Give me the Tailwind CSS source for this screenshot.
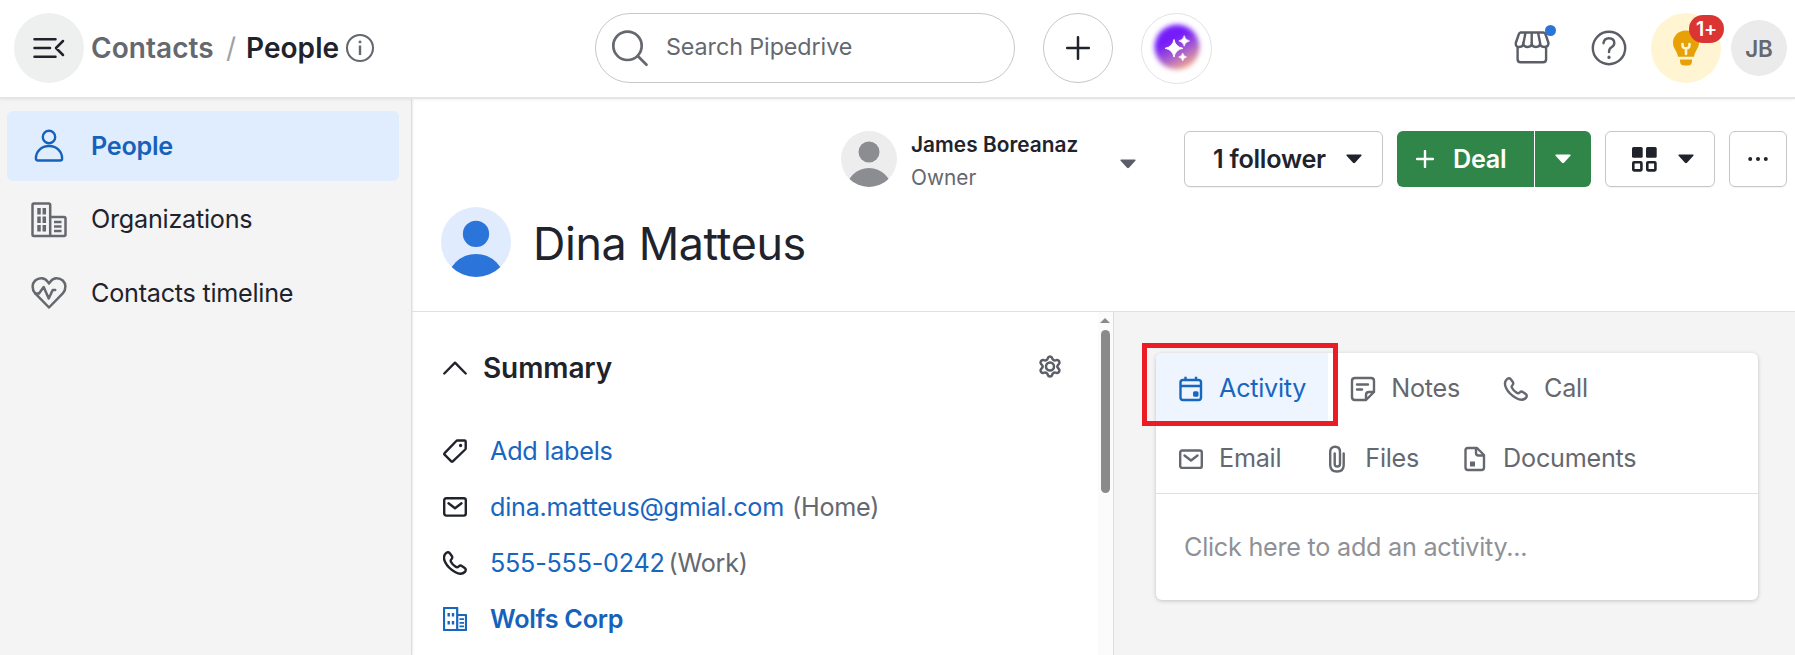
<!DOCTYPE html>
<html lang="en">
<head>
  <meta charset="UTF-8">
  <meta name="viewport" content="width=device-width, initial-scale=1.0">
  <title>Dina Matteus - Contacts</title>
  <script src="https://cdn.jsdelivr.net/npm/@tailwindcss/browser@4"></script>
</head>
<body class="w-[1795px] h-[655px] overflow-hidden bg-white font-['Inter','Liberation_Sans',sans-serif] text-[25.2px] leading-[35px] tracking-[-0.25px] text-[#21232c] whitespace-nowrap">
  <div class="flex flex-col h-full">

    <!-- Top bar -->
    <header class="relative z-10 flex items-center h-[99px] shrink-0 pb-px bg-white border-b-2 border-[#e5e5e6] shadow-[0_1px_3px_rgba(0,0,0,0.06)]">
      <div class="flex items-center w-[595px] pl-[14px] shrink-0">
        <button class="flex items-center justify-center size-[70px] rounded-full bg-[#eeefef]">
          <svg class="size-9" viewBox="0 0 36 36" fill="none" stroke="#21232c" stroke-width="2.5" stroke-linecap="round" stroke-linejoin="round">
            <path d="M3.5 9.2h21M3.5 18h15.5M3.5 26.8h21M32 11l-7 7 7 7"/>
          </svg>
        </button>
        <div class="flex items-center ml-[7px] text-[28px] tracking-[0.05px] font-semibold">
          <span class="text-[#65686f] w-[135px]">Contacts</span>
          <span class="text-[#9fa1a6] font-normal w-5">/</span>
          <span>People</span>
          <svg class="size-[30px] ml-[6px]" viewBox="0 0 30 30" fill="none" stroke="#65686f" stroke-width="2.1">
            <circle cx="15" cy="15" r="13"/>
            <path d="M15 12.5v9.5" stroke-width="2.4"/>
            <path d="M15 7.7v2.5" stroke-width="2.6"/>
          </svg>
        </div>
      </div>

      <div class="flex items-center w-[420px] h-[70px] shrink-0 pl-[14px] border border-[#c6c7c9] rounded-full text-[#65686f] text-[23.3px]">
        <svg class="size-10" viewBox="0 0 40 40" fill="none" stroke="#65686f" stroke-width="2.7" stroke-linecap="round">
          <circle cx="17.5" cy="17.8" r="14.2"/>
          <path d="M28 28.2l8.5 8.5"/>
        </svg>
        <span class="ml-4 mb-[3px] tracking-[-0.08px]">Search Pipedrive</span>
      </div>

      <button class="flex items-center justify-center size-[70px] ml-7 shrink-0 border border-[#c6c7c9] rounded-full">
        <svg class="size-6" viewBox="0 0 24 24" stroke="#21232c" stroke-width="2.5" stroke-linecap="round"><path d="M12 1.2v21.6M1.2 12h21.6"/></svg>
      </button>
      <button class="flex items-center justify-center size-[71px] ml-7 shrink-0 border border-[#e3e3e4] rounded-full">
        <svg class="size-[64px]" viewBox="0 0 64 64">
          <defs>
            <linearGradient id="ai" x1="0.3" y1="0.1" x2="0.75" y2="0.95">
              <stop offset="0.25" stop-color="#741afa"/>
              <stop offset="0.6" stop-color="#a45bd0"/>
              <stop offset="1" stop-color="#f3ab88"/>
            </linearGradient>
            <filter id="soft" x="-30%" y="-30%" width="160%" height="160%"><feGaussianBlur stdDeviation="2.8"/></filter>
          </defs>
          <circle cx="32" cy="31" r="22.5" fill="url(#ai)" filter="url(#soft)"/>
          <g fill="#fff" stroke="#fff" stroke-width=".6">
            <path d="M29 23.5q1.4 7.4 8.8 8.8q-7.4 1.4-8.8 8.8q-1.4-7.4-8.8-8.8q7.4-1.4 8.8-8.8z" stroke-width="1"/>
            <path d="M39.2 19.5q1 4.6 5.4 5.4q-4.4.9-5.4 5.4q-1-4.5-5.4-5.4q4.4-.8 5.4-5.4z"/>
            <path d="M37.7 37q.8 3.3 4 4q-3.2.7-4 4q-.8-3.3-4-4q3.2-.7 4-4z"/>
          </g>
        </svg>
      </button>

      <div class="flex items-center ml-auto pr-2">
        <div class="relative">
          <svg class="w-[38px] h-9" viewBox="0 0 38 36" fill="none" stroke="#5b5e66" stroke-width="2.4" stroke-linejoin="round">
            <path d="M7.5 2.5H30q2 0 2.6 2l2.9 8.5q0 4-4.2 4t-4.2-4q0 4-4.2 4t-4.2-4q0 4-4.2 4t-4.2-4q0 4-4 4t-3.500-4l2.900-8.500q.6-2 2-2z"/>
            <path d="M10.500 13l2-10.300M18.700 13V2.700M27.100 13l-2-10.300M4.600 16.500v12.700q0 3 3 3h22.500q3 0 3-3V16.500"/>
          </svg>
          <span class="absolute -top-[5px] left-[32px] size-[11px] rounded-full bg-[#2b74da]"></span>
        </div>
        <svg class="size-9 ml-10" viewBox="0 0 36 36" fill="none" stroke="#5b5e66" stroke-width="2.4" stroke-linecap="round">
          <circle cx="18" cy="18" r="16.2"/>
          <path d="M12.5 13.200q.5-5 5.500-5 5.300 0 5.300 4.900 0 2.500-2.800 4.200-2.500 1.500-2.500 4.700"/>
          <path d="M18 27.200v.3" stroke-width="3.200"/>
        </svg>
        <div class="relative flex items-center justify-center size-[70px] ml-6 rounded-full bg-[#fff5d2]">
          <svg class="w-[28px] h-[38px] -ml-px" viewBox="0 0 28 38" fill="#e8a007">
            <path d="M14 1.500c7.500 0 13 5.500 13 12.300 0 5.700-4 7.600-5 14H6c-1-6.400-5-8.300-5-14C1 7 6.500 1.500 14 1.500z"/>
            <path d="M8 30.500h12v1.500q0 4.500-4.500 4.500h-3Q8 36.500 8 32z"/>
            <path d="M10.500 15v1.500q0 2 1.700 2.500l1.800.7 1.800-.7q1.700-.5 1.700-2.500V15M14 19.500V25" fill="none" stroke="#fff5d2" stroke-width="2.600" stroke-linecap="round"/>
          </svg>
          <span class="absolute top-[2px] left-[38px] flex items-center justify-center w-[35px] h-7 rounded-full bg-[#da3533] text-white text-[19.6px] font-semibold">1+</span>
        </div>
        <div class="flex items-center justify-center size-14 ml-[10px] rounded-full bg-[#ebebec] text-[#65686f] text-[22.4px] tracking-normal font-semibold">JB</div>
      </div>
    </header>

    <div class="flex flex-1 min-h-0">
      <!-- Sidebar -->
      <nav class="w-[412px] shrink-0 pt-3 pl-[7px] pr-3 bg-[#f4f4f4] border-r border-[#dcdddf] flex flex-col gap-[3.5px] shadow-[1px_0_2px_rgba(0,0,0,0.08)]">
        <a class="flex items-center h-[70px] shrink-0 pl-6 rounded-md bg-[#e0edff] text-[#1662bb] font-semibold">
          <svg class="size-9" viewBox="0 0 36 36" fill="none" stroke="currentColor" stroke-width="2.4" stroke-linejoin="round">
            <circle cx="18" cy="9" r="6.2"/>
            <path d="M4.900 30.500c0-7 5.500-12.500 13.100-12.500s13.100 5.500 13.100 12.500q0 2-2 2H6.900q-2 0-2-2z"/>
          </svg>
          <span class="ml-6">People</span>
        </a>
        <a class="flex items-center h-[70px] shrink-0 pl-6">
          <svg class="size-9" viewBox="0 0 36 36" fill="none" stroke="#65686f" stroke-width="2.5" stroke-linejoin="round">
            <path d="M19.200 34H2.500q-1 0-1-1V3q0-1.500 1.500-1.500h14.700q1.500 0 1.500 1.500zM19.200 15h13.800q1.500 0 1.500 1.500V32.500q0 1.500-1.500 1.500H19.200"/>
            <path d="M8 6v6.500M13.300 6v6.500M8 14.500V21M13.300 14.500V21M8 23v6.500M13.300 23v6.500" stroke-width="3.500"/>
            <path d="M23 20h7.500M23 24.500h7.500M23 29h7.500" stroke-width="2.300"/>
          </svg>
          <span class="ml-6">Organizations</span>
        </a>
        <a class="flex items-center h-[70px] shrink-0 pl-6">
          <svg class="size-9" viewBox="0 0 36 36" fill="none" stroke="#65686f" stroke-width="2.5" stroke-linejoin="round" stroke-linecap="round">
            <path d="M18 32.500L4.200 18.300C.5 14.200 1 8.500 4.200 5.500 8 2.200 13.500 2.500 16.300 6.200L18 8.500l1.700-2.300C22.500 2.500 28 2.200 31.800 5.500c3.200 3 3.700 8.700 0 12.800z"/>
            <path d="M4.500 18.500H8l4.700-6.500 5 11.500 4-8.500h2.500"/>
          </svg>
          <span class="ml-6">Contacts timeline</span>
        </a>
      </nav>

      <main class="flex flex-col flex-1 min-w-0">
        <!-- Person header -->
        <section class="h-[213px] shrink-0 pt-8 pl-[29px] pr-2 border-b border-[#dfe0e2]">
          <div class="flex items-center justify-end h-14">
            <svg class="size-14" viewBox="0 0 56 56">
              <clipPath id="own"><circle cx="28" cy="28" r="28"/></clipPath>
              <g clip-path="url(#own)">
                <path d="M0 0h56v56H0z" fill="#ededee"/>
                <circle cx="28" cy="21" r="10.5" fill="#8c8d91"/>
                <circle cx="28" cy="60" r="23" fill="#8c8d91"/>
              </g>
            </svg>
            <div class="flex flex-col w-[209px] ml-[14px] pt-1 text-[20.8px] leading-[33px] tracking-[0.05px]">
              <span class="font-semibold">James Boreanaz</span>
              <span class="text-[#65686f]">Owner</span>
            </div>
            <svg class="w-4 h-[10px] mt-[9px]" viewBox="0 0 16 10" fill="#5b5e66"><path d="M1 .5h14q1 .2.4 1.200L9 8.800q-1 .9-2 0L.6 1.700Q0 .7 1 .5z"/></svg>

            <button class="flex items-center w-[199px] h-14 ml-12 pl-7 border border-[#c6c7c9] rounded-md font-semibold shadow-[0_1px_1px_rgba(0,0,0,0.05)]">
              <span class="w-[133px] text-left">1 follower</span>
              <svg class="w-4 h-[10px]" viewBox="0 0 16 10" fill="#21232c"><path d="M1 .5h14q1 .2.4 1.200L9 8.800q-1 .9-2 0L.6 1.700Q0 .7 1 .5z"/></svg>
            </button>
            <div class="flex items-stretch w-[194px] h-14 ml-[14px] rounded-md bg-[#2f8648] text-white font-semibold">
              <button class="flex items-center w-[138px] pl-[19px] border-r border-white">
                <svg class="size-[18px]" viewBox="0 0 18 18" stroke="#fff" stroke-width="2.400" stroke-linecap="round"><path d="M9 1v16M1 9h16"/></svg>
                <span class="ml-[19px]">Deal</span>
              </button>
              <button class="flex flex-1 items-center justify-center">
                <svg class="w-4 h-[10px]" viewBox="0 0 16 10" fill="#fff"><path d="M1 .5h14q1 .2.4 1.200L9 8.800q-1 .9-2 0L.6 1.700Q0 .7 1 .5z"/></svg>
              </button>
            </div>
            <button class="flex items-center w-[110px] h-14 ml-[14px] pl-[26px] border border-[#c6c7c9] rounded-md shadow-[0_1px_1px_rgba(0,0,0,0.05)]">
              <svg class="size-[25px]" viewBox="0 0 25 25" fill="#21232c">
                <rect width="10.700" height="10.700" rx="1.500"/>
                <rect x="14" width="10.700" height="10.700" rx="1.500"/>
                <g fill="none" stroke="#21232c" stroke-width="2.600">
                  <rect x="1.300" y="15.300" width="8.100" height="8.100" rx=".8"/>
                  <rect x="15.300" y="15.300" width="8.100" height="8.100" rx=".8"/>
                </g>
              </svg>
              <svg class="w-4 h-[10px] ml-[21px]" viewBox="0 0 16 10" fill="#21232c"><path d="M1 .5h14q1 .2.4 1.200L9 8.800q-1 .9-2 0L.6 1.700Q0 .7 1 .5z"/></svg>
            </button>
            <button class="flex items-center justify-center w-[58px] h-14 ml-[14px] border border-[#c6c7c9] rounded-md shadow-[0_1px_1px_rgba(0,0,0,0.05)]">
              <svg class="w-5 h-1" viewBox="0 0 20 4" fill="#21232c"><circle cx="2.200" cy="2" r="2"/><circle cx="10" cy="2" r="2"/><circle cx="17.800" cy="2" r="2"/></svg>
            </button>
          </div>
          <div class="flex items-center mt-5">
            <svg class="size-[70px]" viewBox="0 0 56 56">
              <g clip-path="url(#own)">
                <path d="M0 0h56v56H0z" fill="#e0ebfe"/>
                <circle cx="28" cy="21.500" r="10.500" fill="#2b74da"/>
                <circle cx="28" cy="60.500" r="23" fill="#2b74da"/>
              </g>
            </svg>
            <h1 class="ml-[22px] mt-1 text-[44.8px] leading-[56px] tracking-[-0.35px]">Dina Matteus</h1>
          </div>
        </section>

        <div class="flex flex-1 min-h-0">
          <!-- Summary -->
          <section class="flex-1 pl-[31px] pt-[39px]">
            <div class="flex items-center">
              <svg class="w-6 h-[14px] -mt-[2px]" viewBox="0 0 24 14" fill="none" stroke="#21232c" stroke-width="2.400" stroke-linecap="round" stroke-linejoin="round"><path d="M1.300 12.500L12 1.700l10.700 10.800"/></svg>
              <h2 class="ml-4 text-[28px] tracking-[-0.1px] font-semibold">Summary</h2>
              <svg class="size-7 ml-auto mr-[34px] -mt-[2px]" viewBox="0 0 28 28" fill="none" stroke="#5b5e66" stroke-width="2.500" stroke-linejoin="round">
                <path d="M11.800 4.200q.5-1.700 2.200-1.700t2.200 1.700l.4 1q1 1.600 2.900 1.200l1.100-.3q1.800-.2 2.600 1.200t-.4 2.800l-.8.900q-1.300 1.500 0 3l.8.900q1.200 1.400.4 2.800t-2.600 1.200l-1.100-.3q-1.900-.4-2.900 1.200l-.4 1q-.5 1.700-2.200 1.700t-2.200-1.700l-.4-1q-1-1.600-2.900-1.200l-1.100.3q-1.800.2-2.600-1.200t.4-2.800l.8-.9q1.300-1.500 0-3l-.8-.9Q4 8.700 4.800 7.300t2.600-1.200l1.100.3q1.900.4 2.900-1.200z"/>
                <circle cx="14" cy="12.500" r="4"/>
              </svg>
            </div>
            <ul class="mt-[37px] flex flex-col">
              <li class="flex items-center h-14">
                <svg class="size-6" viewBox="0 0 24 24" fill="none" stroke="#21232c" stroke-width="2.400" stroke-linejoin="round">
                  <path d="M14.300 1.500H21.500q1.200 0 1.200 1.200V9.300q0 .6-.5 1.200L9.800 22.300q-.8.700-1.500 0L1.600 15.700q-.7-.7 0-1.500L13.300 2q.4-.5 1-.5z"/>
                  <circle cx="17.600" cy="6.500" r="1" fill="#21232c" stroke-width="1.300"/>
                </svg>
                <a class="ml-[23px] text-[#1766c0]">Add labels</a>
              </li>
              <li class="flex items-center h-14">
                <svg class="size-6" viewBox="0 0 24 24" fill="none" stroke="#21232c" stroke-width="2.400" stroke-linejoin="round" stroke-linecap="round">
                  <rect x="1.200" y="3.200" width="21.600" height="17.400" rx="2"/>
                  <path d="M5.500 8.200l6.500 5 6.500-5"/>
                </svg>
                <a class="ml-[23px] text-[#1766c0]">dina.matteus@gmial.com</a>
                <span class="ml-2 text-[#65686f]">(Home)</span>
              </li>
              <li class="flex items-center h-14">
                <svg class="size-6" viewBox="0 0 24 24" fill="none" stroke="#21232c" stroke-width="2.400" stroke-linejoin="round">
                  <path id="phone" d="M2.800 2.300C4 1 5.700.9 6.800 2.200l2 2.800c.8 1.200.6 2-.2 3-.8.800-1.400 1.500-.7 2.800 1 2 2.800 3.900 5 5.100 1.300.7 2 .2 2.900-.6 1-.9 1.900-1.100 3-.3l2.900 2c1.400 1.100 1.400 2.800.1 4-2.300 2.200-5.600 2.300-9.300.3C7.300 18.400 4 15 2.100 11 .4 7.500.6 4.500 2.800 2.300z"/>
                </svg>
                <a class="ml-[23px] text-[#1766c0]">555-555-0242</a>
                <span class="ml-1 text-[#65686f]">(Work)</span>
              </li>
              <li class="flex items-center h-14">
                <svg class="size-6" viewBox="0 0 24 24" fill="none" stroke="#1766c0" stroke-width="2.200" stroke-linejoin="round">
                  <path d="M14.200 23H1V1h13.200zM14.200 8H23v15h-8.800"/>
                  <path d="M5.700 6v3.500M10 6v3.500M5.700 14v3.500M10 14v3.500" stroke-width="2.400"/>
                  <path d="M16.500 12.200h4.500M16.500 15.800h4.500M16.500 19.400h4.500" stroke-width="1.800"/>
                </svg>
                <a class="ml-[23px] text-[#1662bb] font-semibold">Wolfs Corp</a>
              </li>
            </ul>
          </section>

          <!-- Scrollbar -->
          <div class="flex flex-col items-center w-[15px] shrink-0 pt-[6px] pr-px bg-[#fbfbfb]">
            <svg class="w-[10px] h-[5px]" viewBox="0 0 10 5" fill="#8a8a8a"><path d="M5 0l5 5H0z"/></svg>
            <div class="w-[9px] h-[163px] mt-[7px] rounded-full bg-[#8a8a8a]"></div>
          </div>

          <!-- Activity composer -->
          <section class="w-[682px] shrink-0 pl-[42px] pt-[41px] bg-[#f4f4f4] border-l border-[#dcdddf]">
            <div class="relative w-[602px] h-[247px] bg-white rounded-md shadow-[0_1px_4px_rgba(0,0,0,0.2)] text-[#65686f]">
              <div class="flex h-[71px]">
                <a class="flex items-center gap-[14px] pl-[21px] pr-[22px] bg-[#eef5fe] rounded-tl-md text-[#1766c0]">
                  <svg class="size-7" viewBox="0 0 28 28" fill="none" stroke="currentColor" stroke-width="2.400" stroke-linejoin="round">
                    <rect x="3.500" y="5" width="20.500" height="20" rx="2.500"/>
                    <path d="M3.500 11H24M8.500 1.800V6M19 1.800V6"/>
                    <rect x="16.800" y="17" width="4" height="4" rx=".8" fill="currentColor" stroke-width="1.500"/>
                  </svg>
                  <span>Activity</span>
                </a>
                <a class="flex items-center gap-[14px] px-[21px]">
                  <svg class="size-7" viewBox="0 0 28 28" fill="none" stroke="currentColor" stroke-width="2.400" stroke-linejoin="round" stroke-linecap="round">
                    <path d="M17 25H6q-3 0-3-3V6q0-3 3-3h16q3 0 3 3v11l-8 8v-5q0-3 3-3h5M8 9.500h11M8 14.500h5"/>
                  </svg>
                  <span>Notes</span>
                </a>
                <a class="flex items-center gap-[14px] px-[21px]">
                  <svg class="size-7" viewBox="-2 -2 28 28" fill="none" stroke="currentColor" stroke-width="2.400" stroke-linejoin="round"><use href="#phone"/></svg>
                  <span>Call</span>
                </a>
              </div>
              <div class="flex h-[70px] border-b border-[#dfe0e2]">
                <a class="flex items-center gap-[14px] px-[21px]">
                  <svg class="size-7" viewBox="-2 -2 28 28" fill="none" stroke="currentColor" stroke-width="2.400" stroke-linejoin="round" stroke-linecap="round">
                    <rect x="1.200" y="3.500" width="21.600" height="17.400" rx="2"/>
                    <path d="M5.500 8.500l6.500 5 6.500-5"/>
                  </svg>
                  <span>Email</span>
                </a>
                <a class="flex items-center gap-[14px] px-[21px]">
                  <svg class="size-7" viewBox="0 0 28 28" fill="none" stroke="currentColor" stroke-width="2.400" stroke-linecap="round">
                    <path d="M20.700 8.500V20q0 6.500-6.700 6.500T7.200 20V6.800q0-5 4.900-5t4.900 5V19q0 2.500-2.700 2.500T11.700 19V8.500"/>
                  </svg>
                  <span>Files</span>
                </a>
                <a class="flex items-center gap-[14px] px-[21px]">
                  <svg class="size-7" viewBox="0 0 28 28" fill="none" stroke="currentColor" stroke-width="2.400" stroke-linejoin="round">
                    <path d="M16 3H7q-2.500 0-2.500 2.500v17Q4.500 25 7 25h13.500q2.500 0 2.500-2.500V10zM15 3.500v4.500q0 2.500 2.500 2.500H23"/>
                    <path d="M9 16.500h5v5H9z" fill="currentColor" stroke="none"/>
                  </svg>
                  <span>Documents</span>
                </a>
              </div>
              <div class="flex items-center h-[107px] pl-[28px] text-[#8f9196]">Click here to add an activity...</div>
              <!-- Highlight frame around the active tab -->
              <div class="absolute -top-[10px] -left-[14px] w-[196px] h-[83px] border-[5px] border-[#ec1c24]"></div>
            </div>
          </section>
        </div>
      </main>
    </div>
  </div>
</body>
</html>
